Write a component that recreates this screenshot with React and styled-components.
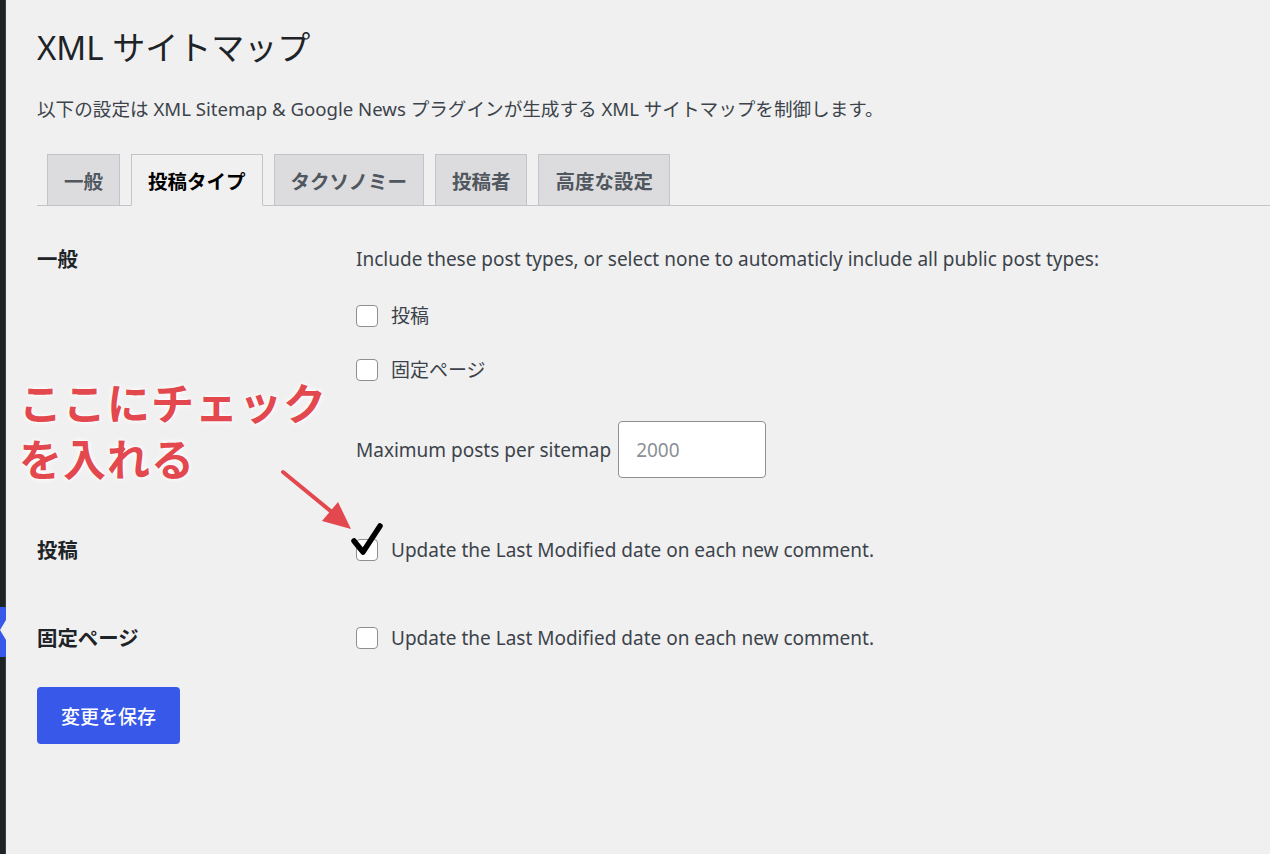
import React from 'react';
import styled, { createGlobalStyle } from 'styled-components';

const GlobalStyle = createGlobalStyle`
  html, body {
    margin: 0;
    padding: 0;
    background: #f0f0f1;
  }
  body {
    font-family: "Noto Sans", "Noto Sans CJK JP", sans-serif;
    color: #3c434a;
  }
`;

const Page = styled.div`
  display: flex;
  min-height: 854px;
  width: 1270px;
  overflow: hidden;
  background: #f0f0f1;
`;

const Sidebar = styled.aside`
  position: relative;
  flex: 0 0 5px;
  background: #1d2327;
  border-right: 1px solid #3a3f44;
`;

const CurrentMenu = styled.div`
  position: absolute;
  left: 0;
  right: -1px;
  top: 607px;
  height: 50px;
  background: #3858e9;

  &::after {
    content: "";
    position: absolute;
    right: 0;
    top: 13px;
    border-style: solid;
    border-width: 10px 6px 10px 0;
    border-color: transparent #f0f0f1 transparent transparent;
  }
`;

const Wrap = styled.main`
  position: relative;
  flex: 1;
  padding: 28px 0 0 31px;
`;

const Title = styled.h1`
  margin: 0;
  font-size: 33px;
  font-weight: 400;
  line-height: 40px;
  color: #1d2327;
`;

const Intro = styled.p`
  margin: 28px 0 0;
  font-size: 18.6px;
  line-height: 26px;
`;

const TabBar = styled.nav`
  display: flex;
  gap: 11px;
  margin-top: 32px;
  padding-left: 10px;
  border-bottom: 1px solid #c3c4c7;
`;

const Tab = styled.a`
  display: flex;
  align-items: center;
  height: 50px;
  padding: 0 16px;
  margin-bottom: -1px;
  border: 1px solid #c3c4c7;
  border-bottom-color: ${p => (p.$active ? '#f0f0f1' : '#c3c4c7')};
  background: ${p => (p.$active ? '#f0f0f1' : '#dcdcde')};
  color: ${p => (p.$active ? '#000' : '#50575e')};
  font-size: 19.5px;
  font-weight: 700;
  text-decoration: none;
  white-space: nowrap;
`;

const FormTable = styled.div`
  margin-top: 10px;
`;

const Row = styled.div`
  display: grid;
  grid-template-columns: 319px 1fr;
  padding: ${p => p.$pad || '31px 0 31px'};
`;

const Th = styled.div`
  font-size: 20.4px;
  font-weight: 700;
  line-height: 26px;
  color: #1d2327;
`;

const Td = styled.div`
  font-size: 19px;
  line-height: 26px;
`;

const Fieldset = styled.div`
  display: flex;
  flex-direction: column;
  gap: 28px;
  margin-top: 31px;
`;

const CheckLabel = styled.label`
  display: flex;
  align-items: center;
  gap: 13px;
  height: 26px;
`;

const Box = styled.span`
  position: relative;
  flex: 0 0 auto;
  width: 20px;
  height: 20px;
  border: 1px solid #8c8f94;
  border-radius: 4px;
  background: #fff;
`;

const Tick = styled.svg`
  position: absolute;
  left: -5px;
  top: -16px;
  overflow: visible;
`;

const NumberRow = styled.div`
  display: flex;
  align-items: center;
  gap: 7px;
  margin-top: 38px;
`;

const NumberInput = styled.div`
  display: flex;
  align-items: center;
  box-sizing: border-box;
  width: 148px;
  height: 57px;
  padding-left: 17px;
  border: 1px solid #8c8f94;
  border-radius: 4px;
  background: #fff;
  color: #8c8f94;
`;

const SaveButton = styled.button`
  margin-top: 5px;
  width: 143px;
  height: 57px;
  border: 0;
  border-radius: 4px;
  background: #3858e9;
  color: #fff;
  font-family: inherit;
  font-size: 19px;
  font-weight: 500;
`;

const Note = styled.div`
  position: absolute;
  left: 13px;
  top: 373px;
  color: #e2484e;
  font-family: "Noto Sans CJK JP", sans-serif;
  font-size: 43px;
  font-weight: 700;
  line-height: 56px;
  letter-spacing: 1px;
  text-shadow: 0 0 6px #fff, 0 0 3px #fff;
`;

const Arrow = styled.svg`
  position: absolute;
  left: -6px;
  top: 0;
  pointer-events: none;
`;

function Checkbox({ checked, children }) {
  return (
    <CheckLabel>
      <Box>
        {checked && (
          <Tick width="32" height="32" viewBox="0 0 32 32">
            <polyline
              points="2,17 11,28 28,2"
              fill="none"
              stroke="#000"
              strokeWidth="5.5"
              strokeLinecap="round"
              strokeLinejoin="round"
            />
          </Tick>
        )}
      </Box>
      {children}
    </CheckLabel>
  );
}

export default function App() {
  return (
    <Page>
      <GlobalStyle />
      <Sidebar>
        <CurrentMenu />
      </Sidebar>
      <Wrap>
        <Title>XML サイトマップ</Title>
        <Intro>以下の設定は XML Sitemap &amp; Google News プラグインが生成する XML サイトマップを制御します。</Intro>

        <TabBar>
          <Tab>一般</Tab>
          <Tab $active>投稿タイプ</Tab>
          <Tab>タクソノミー</Tab>
          <Tab>投稿者</Tab>
          <Tab>高度な設定</Tab>
        </TabBar>

        <FormTable>
          <Row $pad="30px 0 28px">
            <Th>一般</Th>
            <Td>
              Include these post types, or select none to automaticly include all public post types:
              <Fieldset>
                <Checkbox>投稿</Checkbox>
                <Checkbox>固定ページ</Checkbox>
              </Fieldset>
              <NumberRow>
                Maximum posts per sitemap
                <NumberInput>2000</NumberInput>
              </NumberRow>
            </Td>
          </Row>
          <Row>
            <Th>投稿</Th>
            <Td>
              <Checkbox checked>Update the Last Modified date on each new comment.</Checkbox>
            </Td>
          </Row>
          <Row>
            <Th>固定ページ</Th>
            <Td>
              <Checkbox>Update the Last Modified date on each new comment.</Checkbox>
            </Td>
          </Row>
        </FormTable>

        <SaveButton>変更を保存</SaveButton>

        <Note>
          ここにチェック
          <br />
          を入れる
        </Note>
        <Arrow width="400" height="560" viewBox="0 0 400 560">
          <line x1="283" y1="472" x2="333" y2="513" stroke="#e2484e" strokeWidth="4" strokeLinecap="round" />
          <polygon points="351,529 322,521 338,502" fill="#e2484e" />
        </Arrow>
      </Wrap>
    </Page>
  );
}
